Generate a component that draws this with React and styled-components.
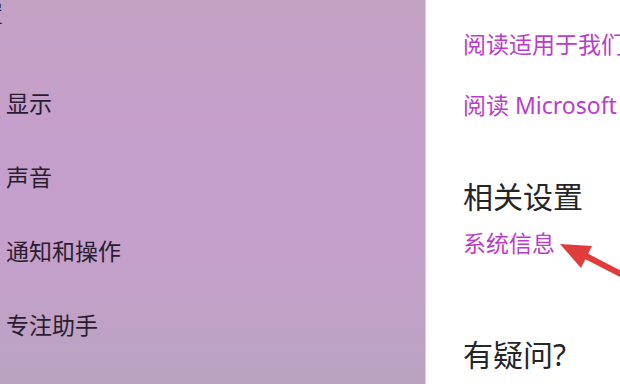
import styled, { createGlobalStyle } from 'styled-components';

const GlobalStyle = createGlobalStyle`
  html, body {
    margin: 0;
    padding: 0;
    background: #fff;
  }
  body {
    font-family: "Noto Sans", "Noto Sans CJK SC", sans-serif;
  }
`;

const Screen = styled.div`
  position: relative;
  width: 620px;
  height: 384px;
  display: flex;
  overflow: hidden;
`;

const Sidebar = styled.div`
  width: 425px;
  flex-shrink: 0;
  background: linear-gradient(180deg, #c4a2c4 0%, #c59fcb 35%, #c5a0cb 65%, #b9a3c1 100%);
  border-right: 1px solid #e6c8ee;
  display: flex;
  flex-direction: column;
  overflow: hidden;
`;

const Crumb = styled.div`
  height: 66px;
  margin-left: -43px;
  font-size: 23px;
  line-height: 26px;
  color: #2a1d30;
  white-space: nowrap;
`;

const NavItem = styled.div`
  height: 74px;
  line-height: 74px;
  padding-left: 6px;
  font-size: 23px;
  color: #2a1d30;
  white-space: nowrap;
`;

const Panel = styled.div`
  flex: 1;
  padding-left: 37px;
  display: flex;
  flex-direction: column;
  overflow: hidden;
  white-space: nowrap;
`;

const Link = styled.div`
  margin-top: ${p => p.$gap}px;
  font-size: 23px;
  line-height: 30px;
  color: #bb3ccc;
`;

const Heading = styled.div`
  margin-top: ${p => p.$gap}px;
  font-size: 30px;
  line-height: 40px;
  color: #262626;
`;

const Arrow = styled.svg`
  position: absolute;
  left: 0;
  top: 0;
  pointer-events: none;
`;

export default function App() {
  return (
    <>
      <GlobalStyle />
      <Screen>
        <Sidebar>
          <Crumb>设置</Crumb>
          <NavItem>显示</NavItem>
          <NavItem>声音</NavItem>
          <NavItem>通知和操作</NavItem>
          <NavItem>专注助手</NavItem>
        </Sidebar>
        <Panel>
          <Link $gap={29}>阅读适用于我们的服务的 Microsoft 服务协议</Link>
          <Link $gap={31}>阅读 Microsoft 隐私声明</Link>
          <Heading $gap={57}>相关设置</Heading>
          <Link $gap={11}>系统信息</Link>
          <Heading $gap={77}>有疑问?</Heading>
        </Panel>
        <Arrow width="620" height="384" viewBox="0 0 620 384">
          <line x1="584" y1="255" x2="640" y2="284" stroke="#e23b3b" strokeWidth="6" />
          <polygon points="560,244 592,246 581,268" fill="#e23b3b" />
        </Arrow>
      </Screen>
    </>
  );
}
